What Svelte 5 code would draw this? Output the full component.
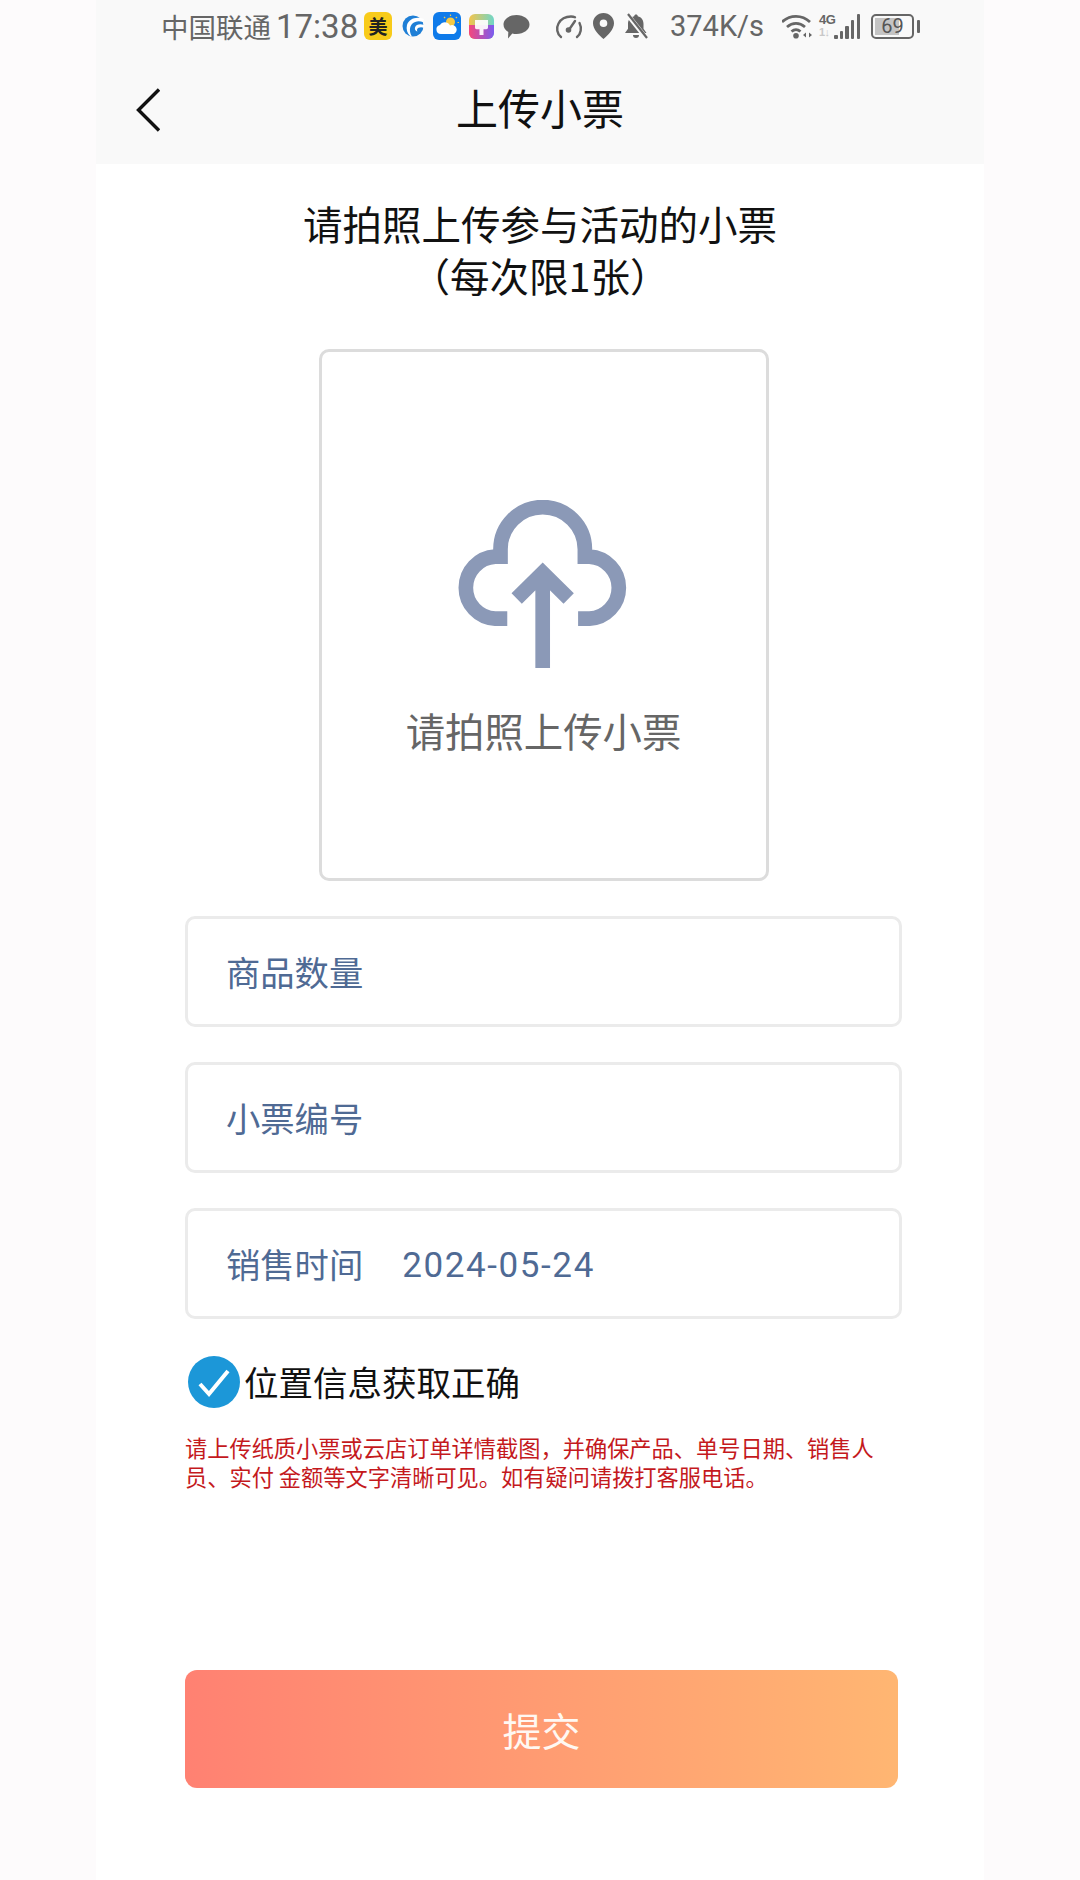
<script>
  const fields = [
    { label: '商品数量' },
    { label: '小票编号' },
    { label: '销售时间', value: '2024-05-24' }
  ];
</script>

<div class="page">
  <header class="top">
    <div class="status">
      <span class="carrier">中国联通</span>
      <span class="clock">17:38</span>
      <span class="mei">美</span>
      <svg class="i-swirl" viewBox="0 0 22 22">
        <circle cx="11" cy="11" r="10.500" fill="#1f7fd6" />
        <path d="M22 4C14 1 7 4 5 10c-1 4 0 8 3 11l2 .5C7 17 7.500 12 10 9c3-3 7-3.500 11-2z" fill="#fff" />
        <path d="M22 10c-4-1.500-8-.5-9 2.500-.5 2 .5 3.500 2.500 4-1-1.500-.5-3 1-3.800 1.500-.7 3.500-.7 5.500 0z" fill="#fff" />
      </svg>
      <svg class="i-weather" viewBox="0 0 28 28">
        <rect width="28" height="28" rx="6" fill="#0f7bea" />
        <circle cx="17.500" cy="10" r="4.500" fill="#f6c945" />
        <path d="M17.500 2.500v1.500M24 5l-1.200 1.200M11 5l1.200 1.200M26 10.500h-1.500" stroke="#f6c945" stroke-width="1.200" />
        <path d="M8 22a4.500 4.500 0 0 1-1-8.900C8.500 9.500 15 9 17 13.500a4.300 4.300 0 0 1 4 8.500z" fill="#fff" />
      </svg>
      <svg class="i-brush" viewBox="0 0 25 25">
        <defs>
          <linearGradient id="brush-a" x1="0" y1="0" x2="1" y2="0">
            <stop offset="0" stop-color="#f4c44b" />
            <stop offset="1" stop-color="#6fd6c8" />
          </linearGradient>
          <linearGradient id="brush-b" x1="0" y1="0" x2="1" y2="0">
            <stop offset="0" stop-color="#f5477c" />
            <stop offset="1" stop-color="#7a5cf0" />
          </linearGradient>
        </defs>
        <rect width="25" height="25" rx="6" fill="url(#brush-a)" />
        <path d="M0 11h25v8a6 6 0 0 1-6 6H6a6 6 0 0 1-6-6z" fill="url(#brush-b)" />
        <path d="M6 6h13v7.500c0 1-.7 1.700-1.700 1.700H14.500V21h-4v-5.800H7.700C6.700 15.200 6 14.500 6 13.500z" fill="#fff" opacity="0.92" />
      </svg>
      <svg class="i-chat" viewBox="0 0 27 25">
        <path d="M13.500 1C20.700 1 26.500 5.300 26.500 10.500S20.700 20 13.500 20c-1.500 0-2.900-.2-4.200-.6L5 24.500l.3-6.500C2.300 16.200.5 13.500.5 10.500.5 5.300 6.300 1 13.500 1z" fill="#666" />
      </svg>

      <svg class="i-gauge" viewBox="0 0 28 25" fill="none" stroke="#666" stroke-width="2.400" stroke-linecap="round">
        <path d="M6 23C2 20 1 14 3.500 9.500 6 5 11 2.500 16 2.500c1.500 0 3 .3 4 .8" />
        <path d="M24.500 9c2.500 5 1.500 11-2.500 14" />
        <path d="M20 7l-5.500 8" />
        <circle cx="13.500" cy="16" r="1.600" fill="#666" />
      </svg>
      <svg class="i-pin" viewBox="0 0 21 26">
        <path fill-rule="evenodd" d="M10.500 0C16.300 0 21 4.500 21 10.200 21 16.500 15 22 10.500 26 6 22 0 16.500 0 10.200 0 4.500 4.700 0 10.500 0zm0 6.500a3.800 3.800 0 1 0 0 7.600 3.800 3.800 0 0 0 0-7.600z" fill="#666" />
      </svg>
      <svg class="i-bell" viewBox="0 0 24 26">
        <path d="M12 1.500c1 0 1.700.7 1.800 1.700 3.700.8 5.700 3.800 5.700 7.500v5l3 4.300H1l3-4.300v-5c0-3.700 2-6.700 6.200-7.500.1-1 .8-1.700 1.800-1.700z" fill="#666" />
        <path d="M9 22h6a3 3 0 0 1-6 0z" fill="#666" />
        <path d="M3 1l19 24" stroke="#f9f9f9" stroke-width="4.500" />
        <path d="M4 1l19 24" stroke="#666" stroke-width="2.200" />
      </svg>

      <span class="speed">374K/s</span>

      <svg class="i-wifi" viewBox="0 0 31 25" fill="none" stroke="#666" stroke-width="2.800">
        <path d="M0 8C8 .5 20 .5 28 8" />
        <path d="M5 13c5.500-4.800 12.500-4.800 18 0" />
        <path d="M9.500 17.500c2.700-2.300 6.300-2.300 9 0" />
        <circle cx="14" cy="21.800" r="2.800" fill="#666" stroke="none" />
        <path d="M24 21.500l-3 2.500 3 2.500zM27 21.500l3 2.500-3 2.500z" fill="#666" stroke="none" transform="translate(0 -3)" />
      </svg>
      <div class="net">
        <span class="net-g">4G</span>
        <span class="net-d">1↓</span>
      </div>
      <div class="bars">
        <i style="height: 4px"></i>
        <i style="height: 8px"></i>
        <i style="height: 13px"></i>
        <i style="height: 19px"></i>
        <i style="height: 25px"></i>
      </div>
      <div class="battery">
        <div class="cell"><span class="fill"></span><span class="pct">69</span></div>
        <span class="nub"></span>
      </div>
    </div>

    <div class="nav">
      <svg class="back" viewBox="0 0 24 44" fill="none" stroke="#111" stroke-width="3.400">
        <path d="M23 1.500L2.500 22 23 42.500" />
      </svg>
      <h1>上传小票</h1>
    </div>
  </header>

  <main>
    <p class="intro">请拍照上传参与活动的小票<br />（每次限1张）</p>

    <div class="form">
      <div class="upload">
        <svg class="cloud" viewBox="0 0 170 170" fill="none" stroke="#8b99b7" stroke-width="14.500">
          <path d="M48.700 117.300H36.700A30.700 30.700 0 0 1 36.700 56H42V48.700A41.700 41.700 0 0 1 125.400 48.700V56H130A30.700 30.700 0 0 1 130 117.300H118.700" />
          <path d="M83.700 166V72M58 97.300L83.700 72 109.400 97.300" />
        </svg>
        <span class="upload-text">请拍照上传小票</span>
      </div>

      {#each fields as f}
        <div class="field">
          <span class="label">{f.label}</span>
          {#if f.value}<span class="value">{f.value}</span>{/if}
        </div>
      {/each}

      <div class="check">
        <svg viewBox="0 0 52 52">
          <circle cx="26" cy="26" r="26" fill="#1c97d8" />
          <path d="M12 28l9 10 19-23" fill="none" stroke="#fff" stroke-width="4" />
        </svg>
        <span>位置信息获取正确</span>
      </div>

      <p class="notice">请上传纸质小票或云店订单详情截图，并确保产品、单号日期、销售人<br />员、实付 金额等文字清晰可见。如有疑问请拨打客服电话。</p>

      <button class="submit">提交</button>
    </div>
  </main>
</div>

<style>
  :global(body) {
    background: #fdfbfc;
    font-family: "Noto Sans CJK SC", "Noto Sans", sans-serif;
  }
  .page {
    width: 888px;
    min-height: 1880px;
    margin: 0 auto;
    background: #fff;
  }
  .top {
    height: 164px;
    background: #f9f9f9;
  }
  .status {
    height: 52px;
    padding-left: 65px;
    display: flex;
    align-items: center;
    color: #666;
  }
  .status svg { flex: none; display: block; }
  .carrier { font-size: 27.500px; line-height: 52px; width: 111px; white-space: nowrap; }
  .clock { font-family: Roboto, sans-serif; font-size: 33px; margin-left: 4px; width: 83px; white-space: nowrap; }
  .mei {
    width: 28px;
    height: 28px;
    margin-left: 5px;
    border-radius: 6px;
    background: #f8cb1a;
    color: #222;
    font-size: 19px;
    font-weight: 700;
    line-height: 28px;
    text-align: center;
  }
  .i-swirl { width: 22px; height: 22px; margin-left: 10px; }
  .i-weather { width: 28px; height: 28px; margin-left: 9px; }
  .i-brush { width: 25px; height: 25px; margin-left: 8px; }
  .i-chat { width: 27px; height: 25px; margin-left: 9px; }
  .i-gauge { width: 28px; height: 25px; margin-left: 25px; }
  .i-pin { width: 21px; height: 26px; margin-left: 10px; }
  .i-bell { width: 24px; height: 26px; margin-left: 10px; }
  .speed { font-family: Roboto, sans-serif; font-size: 29px; margin-left: 22px; width: 91px; white-space: nowrap; }
  .i-wifi { width: 31px; height: 25px; margin-left: 21px; }
  .net {
    width: 15px;
    margin-left: 6px;
    height: 26px;
    display: flex;
    flex-direction: column;
    font-family: "Liberation Sans", sans-serif;
    font-size: 13px;
    line-height: 13px;
    font-weight: 700;
    letter-spacing: -0.5px;
    white-space: nowrap;
  }
  .net-d { color: #c8c8c8; font-size: 11px; }
  .bars {
    width: 26px;
    height: 25px;
    display: flex;
    align-items: flex-end;
    justify-content: space-between;
  }
  .bars i { width: 3.500px; background: #666; border-radius: 1px; }
  .battery { display: flex; align-items: center; gap: 3px; margin-left: 11px; }
  .cell {
    position: relative;
    width: 43px;
    height: 25px;
    box-sizing: border-box;
    border: 2px solid #666;
    border-radius: 5px;
  }
  .fill { position: absolute; left: 2px; top: 2px; bottom: 2px; width: 24px; background: #c4c4c4; }
  .pct {
    position: absolute;
    inset: 0;
    font-family: Roboto, sans-serif;
    font-size: 20px;
    line-height: 21px;
    text-align: center;
    color: #555;
  }
  .nub { width: 3px; height: 13px; background: #666; border-radius: 1px; }
  .nav {
    position: relative;
    height: 112px;
    display: flex;
    align-items: center;
    justify-content: center;
  }
  .back { position: absolute; left: 40px; top: 36px; width: 24px; height: 44px; }
  h1 { margin: -3px 0 0; font-size: 42px; font-weight: 400; color: #111; line-height: 56px; }

  main { display: flex; flex-direction: column; }
  .intro {
    margin: 33px 0 0;
    text-align: center;
    font-size: 39.500px;
    line-height: 52px;
    color: #111;
  }
  .form {
    width: 717px;
    margin: 48px 0 0 89px;
    display: flex;
    flex-direction: column;
  }
  .upload {
    box-sizing: border-box;
    width: 450px;
    height: 532px;
    align-self: center;
    padding-top: 148px;
    border: 3px solid #dcdcdc;
    border-radius: 10px;
    display: flex;
    flex-direction: column;
    align-items: center;
  }
  .cloud { width: 172px; height: 172px; display: block; margin-left: 1px; }
  .upload-text { margin-top: 33px; font-size: 39.400px; line-height: 50px; color: #666; }
  .field {
    box-sizing: border-box;
    height: 111px;
    margin-top: 35px;
    padding-left: 38px;
    border: 3px solid #ebebeb;
    border-radius: 10px;
    display: flex;
    align-items: center;
    gap: 39px;
    font-size: 34.300px;
    color: #4f6a94;
  }
  .label { margin-top: -2px; }
  .value { font-family: Roboto, sans-serif; font-size: 35px; letter-spacing: 1.600px; margin-top: 3px; }
  .check {
    margin-top: 37px;
    padding-left: 3px;
    height: 52px;
    display: flex;
    align-items: center;
    gap: 4px;
    font-size: 34.500px;
    color: #111;
  }
  .check span { margin-top: -2px; }
  .check svg { width: 52px; height: 52px; display: block; flex: none; }
  .notice {
    margin: 25px 0 0;
    font-size: 22.230px;
    line-height: 29px;
    color: #c4191d;
    white-space: nowrap;
  }
  .submit {
    width: 713px;
    height: 118px;
    margin-top: 179px;
    padding-bottom: 2px;
    border: 0;
    border-radius: 12px;
    background: linear-gradient(90deg, #ff8172, #ffb672);
    color: #fff8f2;
    font-family: inherit;
    font-size: 39px;
  }
</style>
